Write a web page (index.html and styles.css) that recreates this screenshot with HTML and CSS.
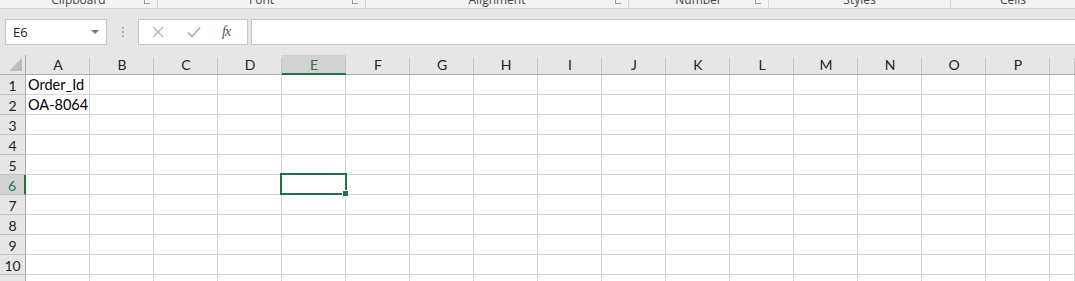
FILE: index.html
```html
<!DOCTYPE html>
<html lang="en">
<head>
    <meta charset="UTF-8">
    <title>Book1 - Excel</title>
    <link rel="stylesheet" href="styles.css">
</head>
<body>
    <div class="groups">
        <div class="group g-clip"><span>Clipboard</span><i class="launch"></i></div>
        <div class="group g-font"><span>Font</span><i class="launch"></i></div>
        <div class="group g-align"><span>Alignment</span><i class="launch"></i></div>
        <div class="group g-num"><span>Number</span><i class="launch"></i></div>
        <div class="group g-styles"><span>Styles</span></div>
        <div class="group g-cells"><span>Cells</span></div>
    </div>

    <div class="bar">
        <div class="namebox">
            <span>E6</span>
            <i class="caret"></i>
        </div>
        <div class="dots"><b></b><b></b><b></b></div>
        <div class="fbtns">
            <svg class="ico" width="12" height="12" viewBox="0 0 12 12"><path d="M1 1L11 11M11 1L1 11" stroke="#b4b4b4" stroke-width="1.3" fill="none"/></svg>
            <svg class="ico" width="14" height="12" viewBox="0 0 14 12"><path d="M1 6.5L5 10.5L13 1.5" stroke="#b4b4b4" stroke-width="1.8" fill="none"/></svg>
            <span class="fx">fx</span>
        </div>
        <div class="finput"></div>
    </div>

    <div class="sheet" id="sheet"></div>

    <script>
        var sheet = document.getElementById("sheet");
        var cols = "ABCDEFGHIJKLMNOP".split("");
        var data = {"A1": "Order_Id", "A2": "OA-8064"};
        var html = '<div class="hd corner"><i class="tri"></i></div>';
        cols.forEach(function (c) {
            html += '<div class="hd col' + (c == "E" ? " on" : "") + '">' + c + '</div>';
        });
        html += '<div class="hd col"></div>';
        for (var r = 1; r <= 11; r++) {
            html += '<div class="hd row' + (r == 6 ? " on" : "") + '">' + r + '</div>';
            cols.forEach(function (c) {
                var key = c + r;
                var sel = key == "E6" ? ' sel' : '';
                html += '<div class="cell' + sel + '">' + (data[key] || "") + '</div>';
            });
            html += '<div class="cell"></div>';
        }
        sheet.innerHTML = html;
    </script>
</body>
</html>
```

FILE: styles.css
```css
*{margin: 0;padding: 0;box-sizing: border-box}
body{
    width: 1075px;
    height: 281px;
    overflow: hidden;
    background: #fff;
    font-family: "Open Sans", "Noto Sans", sans-serif;
}

/* ribbon group labels, only the bottom edge shows */
.groups{
    display: flex;
    height: 9px;
    overflow: hidden;
    background: #f3f3f3;
    border-bottom: 1px solid #d5d5d5;
}
.group{
    position: relative;
    display: flex;
    justify-content: center;
    border-right: 1px solid #d5d5d5;
    color: #444;
    font-size: 12px;
    line-height: 16px;
}
.group span{
    margin-top: -8px;
}
.g-clip{width: 158px}
.g-font{width: 208px}
.g-align{width: 263px}
.g-num{width: 140px}
.g-styles{width: 182px}
.g-cells{flex: 1;border-right: 0}
.launch{
    position: absolute;
    right: 7px;
    top: 0;
    width: 6px;
    height: 4px;
    border-left: 1px solid #9a9a9a;
    border-bottom: 1px solid #9a9a9a;
}

/* name box + formula bar */
.bar{
    display: flex;
    align-items: flex-start;
    height: 46px;
    padding: 10px 0 0 5px;
    background: #e6e6e6;
}
.namebox{
    display: flex;
    align-items: center;
    justify-content: space-between;
    width: 102px;
    height: 26px;
    padding: 0 7px 0 7px;
    background: #fff;
    border: 1px solid #c6c6c6;
    font-size: 13px;
    color: #222;
}
.caret{
    width: 0;
    height: 0;
    border-left: 4px solid transparent;
    border-right: 4px solid transparent;
    border-top: 4px solid #777;
}
.dots{
    display: flex;
    flex-direction: column;
    gap: 2px;
    width: 31px;
    height: 26px;
    justify-content: center;
    align-items: center;
}
.dots b{
    width: 2px;
    height: 2px;
    background: #b0b0b0;
}
.fbtns{
    display: flex;
    align-items: center;
    width: 110px;
    height: 26px;
    padding-left: 13px;
    background: #fff;
    border: 1px solid #c6c6c6;
}
.fbtns .ico:nth-child(1){margin-right: 23px}
.fbtns .ico:nth-child(2){margin-right: 21px}
.fx{
    font-family: "Liberation Serif", serif;
    font-style: italic;
    font-size: 14px;
    color: #555;
    letter-spacing: -1px;
}
.finput{
    flex: 1;
    height: 26px;
    margin-left: 3px;
    background: #fff;
    border: 1px solid #c6c6c6;
    border-right: 0;
}

/* grid */
.sheet{
    display: grid;
    grid-template-columns: 26px repeat(16, 64px) 1fr;
    grid-auto-rows: 20px;
    font-family: "Lato", "Open Sans", sans-serif;
}
.hd{
    background: #e6e6e6;
    color: #222;
    font-size: 14px;
    display: flex;
    align-items: center;
    justify-content: center;
}
.hd.col{
    position: relative;
    border-bottom: 1px solid #ababab;
}
.hd.col::after{
    content: "";
    position: absolute;
    right: 0;
    top: 3px;
    bottom: 0;
    width: 1px;
    background: #c2c2c2;
}
.hd.col.on{
    background: #d2d2d2;
    color: #217346;
    border-bottom: 2px solid #217346;
}
.corner{
    position: relative;
    border-right: 1px solid #ababab;
    border-bottom: 1px solid #ababab;
}
.tri{
    position: absolute;
    right: 3px;
    bottom: 3px;
    width: 0;
    height: 0;
    border-left: 13px solid transparent;
    border-bottom: 13px solid #bcbcbc;
}
.hd.row{
    border-right: 1px solid #ababab;
    border-bottom: 1px solid #c2c2c2;
    padding-top: 1px;
}
.hd.row.on{
    background: #d2d2d2;
    color: #217346;
    border-right: 2px solid #217346;
}
.cell{
    border-right: 1px solid #d4d4d4;
    border-bottom: 1px solid #d4d4d4;
    font-size: 14.5px;
    line-height: 19px;
    padding-left: 2px;
    color: #000;
    white-space: nowrap;
}
.sel{
    position: relative;
}
.sel::before{
    content: "";
    position: absolute;
    left: -2px;
    top: -2px;
    right: -2px;
    bottom: -1px;
    border: 2px solid #217346;
}
.sel::after{
    content: "";
    position: absolute;
    right: -4px;
    bottom: -3px;
    width: 5px;
    height: 5px;
    background: #217346;
    border: 1px solid #fff;
    box-sizing: content-box;
}
```
